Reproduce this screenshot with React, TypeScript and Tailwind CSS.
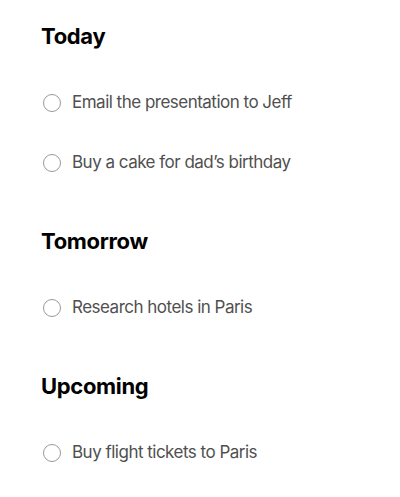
const sections = [
  { title: "Today", tasks: ["Email the presentation to Jeff", "Buy a cake for dad’s birthday"] },
  { title: "Tomorrow", tasks: ["Research hotels in Paris"] },
  { title: "Upcoming", tasks: ["Buy flight tickets to Paris"] },
]

export default function App() {
  return (
    <div
      className="min-h-[497px] bg-white px-[41px] pt-[22px]"
      style={{ fontFamily: "Inter, 'Noto Sans', sans-serif" }}
    >
      <div className="flex flex-col gap-[34px]">
        {sections.map((section) => (
          <section key={section.title}>
            <h2 className="h-[28px] text-[22px] font-bold leading-[28px] tracking-[-0.015em] text-black">
              {section.title}
            </h2>
            <ul className="mt-[23px]">
              {section.tasks.map((task) => (
                <li key={task} className="flex h-[60px] items-center">
                  <span className="ml-[2px] h-[18px] w-[18px] shrink-0 rounded-full border border-[#9a9a9a]" />
                  <span className="ml-[11px] text-[17px] tracking-[-0.03em] text-[#505050]">{task}</span>
                </li>
              ))}
            </ul>
          </section>
        ))}
      </div>
    </div>
  )
}
